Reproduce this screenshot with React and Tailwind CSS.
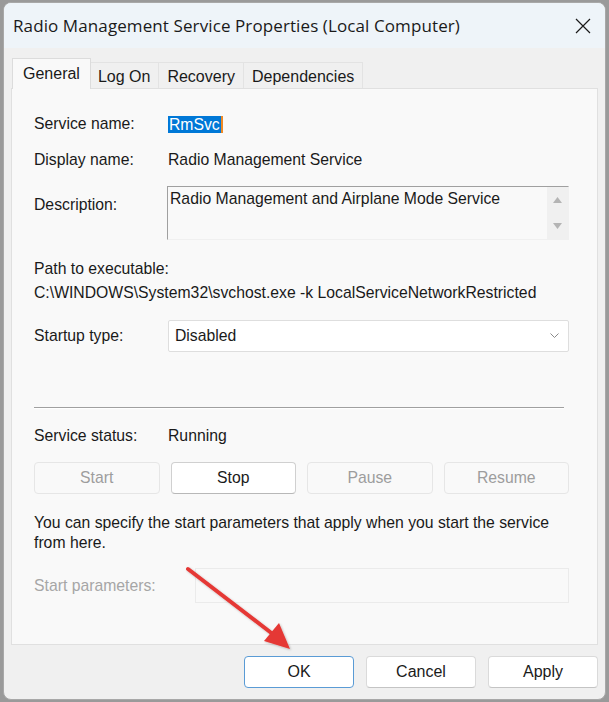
import React from 'react';

const ui = { fontFamily: '"Liberation Sans", Arial, sans-serif' };
const title = { fontFamily: '"Open Sans", "Liberation Sans", sans-serif' };

const Tab = ({ label, active }) => (
  <div
    className={
      active
        ? 'h-[31px] -mr-px z-10 px-[10px] pt-[3px] bg-[#f9f9f9] border border-b-0 border-[#dcdcdc] text-[16px] text-[#1a1a1a]'
        : 'h-[27px] px-[8px] pt-[2px] bg-[#f0f0f0] border border-b-0 border-[#e3e3e3] -ml-px text-[16px] text-[#1a1a1a]'
    }
  >
    {label}
  </div>
);

const SvcButton = ({ label, enabled }) => (
  <div
    className={
      enabled
        ? 'flex-1 h-[32px] flex items-center justify-center rounded-[4px] bg-white border border-[#d0d0d0] border-b-[#b8b8b8] text-[#1a1a1a]'
        : 'flex-1 h-[32px] flex items-center justify-center rounded-[4px] bg-[#f9f9f9] border border-[#e6e6e6] text-[#9d9d9d]'
    }
  >
    {label}
  </div>
);

const DlgButton = ({ label, primary }) => (
  <div
    className={
      primary
        ? 'w-[110px] h-[32px] flex items-center justify-center rounded-[4px] bg-white border border-[#5a9bd5] text-[16px] text-[#1a1a1a]'
        : 'w-[110px] h-[32px] flex items-center justify-center rounded-[4px] bg-white border border-[#dadada] border-b-[#c4c4c4] text-[16px] text-[#1a1a1a]'
    }
  >
    {label}
  </div>
);

const Row = ({ label, children, className = '', labelClass = '' }) => (
  <div className={`flex ${className}`}>
    <div className={`w-[134px] shrink-0 text-[#1a1a1a] ${labelClass}`}>{label}</div>
    {children}
  </div>
);

export default function App() {
  return (
    <div className="w-[609px] h-[702px] bg-[#9a9a9a] pt-[2px] pl-[3px] overflow-hidden" style={ui}>
      <div className="relative w-[603px] h-[698px] rounded-[8px] border border-[#a8a8a8] bg-[#f0f0f0] overflow-hidden flex flex-col">
        {/* Title bar */}
        <div className="h-[45px] shrink-0 bg-[#eef4f9] flex items-center justify-between pl-[9px] pr-[13px]">
          <span className="text-[17px] text-[#1a1a1a] tracking-[0.1px]" style={title}>
            Radio Management Service Properties (Local Computer)
          </span>
          <svg width="16" height="16" viewBox="0 0 16 16" className="mr-[1px]">
            <path d="M1 1 L15 15 M15 1 L1 15" stroke="#1a1a1a" strokeWidth="1.2" fill="none" />
          </svg>
        </div>

        {/* Tabs */}
        <div className="flex items-end pl-[8px] pt-[10px] h-[41px] shrink-0">
          <Tab label="General" active />
          <Tab label="Log On" />
          <Tab label="Recovery" />
          <Tab label="Dependencies" />
        </div>

        {/* Panel */}
        <div className="ml-[7px] w-[587px] h-[557px] bg-[#f9f9f9] border border-[#e0e0e0] -mt-px pl-[22px] pr-[28px] pt-[25px] text-[15.75px] leading-[20px]">
          <Row label="Service name:" className="h-[20px] items-center">
            <span className="bg-[#0078d7] text-white leading-[17px] pl-[1px] pr-[1px] border-r-2 border-[#f08a24]">
              RmSvc
            </span>
          </Row>
          <Row label="Display name:" className="h-[20px] mt-[16px] items-center">
            <span className="text-[#1a1a1a]">Radio Management Service</span>
          </Row>
          <Row label="Description:" className="mt-[16px] items-start" labelClass="pt-[9px]">
            <div className="flex-1 h-[54px] -ml-px flex border-t border-l border-[#a0a0a0] border-r border-b border-r-[#f0f0f0] border-b-[#f0f0f0] bg-[#f9f9f9]">
              <div className="flex-1 pl-[2px] pt-[3px] leading-[18px] text-[#1a1a1a]">
                Radio Management and Airplane Mode Service
              </div>
              <div className="w-[21px] bg-[#f0f0f0] flex flex-col items-center justify-between py-[10px]">
                <svg width="9" height="6" viewBox="0 0 9 6"><path d="M4.5 0 L9 6 L0 6 Z" fill="#b4b4b4" /></svg>
                <svg width="9" height="6" viewBox="0 0 9 6"><path d="M0 0 L9 0 L4.5 6 Z" fill="#b4b4b4" /></svg>
              </div>
            </div>
          </Row>

          <div className="mt-[19px] text-[#1a1a1a]">Path to executable:</div>
          <div className="mt-[4px] text-[#1a1a1a]">
            C:\WINDOWS\System32\svchost.exe -k LocalServiceNetworkRestricted
          </div>

          <Row label="Startup type:" className="mt-[17px] items-center">
            <div className="flex-1 h-[32px] bg-white border border-[#dedede] rounded-[2px] flex items-center justify-between pl-[6px] pr-[9px]">
              <span className="text-[#1a1a1a]">Disabled</span>
              <svg width="9" height="6" viewBox="0 0 9 6">
                <path d="M0.5 0.5 L4.5 4.5 L8.5 0.5" stroke="#8a8a8a" strokeWidth="1" fill="none" />
              </svg>
            </div>
          </Row>

          <div className="mt-[55px] mr-[5px] h-[2px] border-t border-[#a0a0a0] border-b border-b-white" />

          <Row label="Service status:" className="mt-[17px] h-[20px] items-center">
            <span className="text-[#1a1a1a]">Running</span>
          </Row>

          <div className="mt-[16px] flex gap-[11px]">
            <SvcButton label="Start" />
            <SvcButton label="Stop" enabled />
            <SvcButton label="Pause" />
            <SvcButton label="Resume" />
          </div>

          <div className="mt-[19px] text-[#1a1a1a]">
            You can specify the start parameters that apply when you start the service from here.
          </div>

          <div className="mt-[15px] flex items-center">
            <div className="w-[161px] shrink-0 text-[#a6a6a6]">Start parameters:</div>
            <div className="flex-1 h-[35px] bg-[#f9f9f9] border border-[#ebebeb]" />
          </div>
        </div>

        {/* Dialog buttons */}
        <div className="flex justify-end gap-[12px] pr-[7px] pt-[11px]">
          <DlgButton label="OK" primary />
          <DlgButton label="Cancel" />
          <DlgButton label="Apply" />
        </div>

        {/* Annotation arrow */}
        <svg className="absolute left-0 top-0 pointer-events-none" width="603" height="698" viewBox="0 0 603 698">
          <defs>
            <filter id="sh" x="-20%" y="-20%" width="140%" height="140%">
              <feDropShadow dx="1" dy="1" stdDeviation="1" floodColor="#000" floodOpacity="0.25" />
            </filter>
          </defs>
          <g filter="url(#sh)">
            <line x1="184" y1="566" x2="270" y2="632" stroke="#e53935" strokeWidth="4" strokeLinecap="round" />
            <path d="M286 646 L260 638 L275 620 Z" fill="#e53935" />
          </g>
        </svg>
      </div>
    </div>
  );
}
